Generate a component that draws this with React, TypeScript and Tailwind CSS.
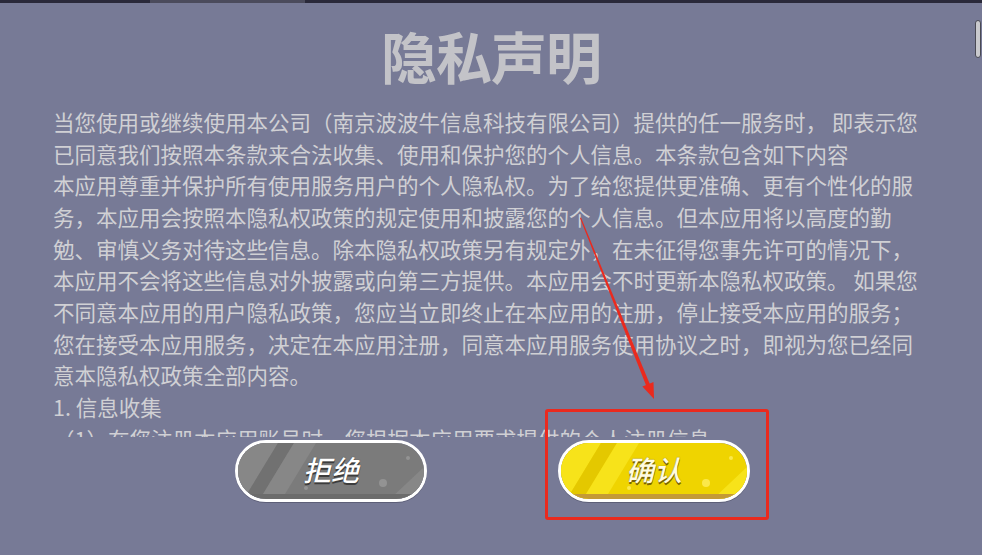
import React from "react";

const lines = [
  "当您使用或继续使用本公司（南京波波牛信息科技有限公司）提供的任一服务时， 即表示您",
  "已同意我们按照本条款来合法收集、使用和保护您的个人信息。本条款包含如下内容",
  "本应用尊重并保护所有使用服务用户的个人隐私权。为了给您提供更准确、更有个性化的服",
  "务，本应用会按照本隐私权政策的规定使用和披露您的个人信息。但本应用将以高度的勤",
  "勉、审慎义务对待这些信息。除本隐私权政策另有规定外，在未征得您事先许可的情况下，",
  "本应用不会将这些信息对外披露或向第三方提供。本应用会不时更新本隐私权政策。 如果您",
  "不同意本应用的用户隐私政策，您应当立即终止在本应用的注册，停止接受本应用的服务；",
  "您在接受本应用服务，决定在本应用注册，同意本应用服务使用协议之时，即视为您已经同",
  "意本隐私权政策全部内容。",
  "1. 信息收集",
];

// next line of the policy, scrolled half out of view
const peekLine = "（1）在您注册本应用账号时，您根据本应用要求提供的个人注册信息";

type Tone = {
  base: string;
  light: string;
  dark: string;
  edge: string;
  dot: string;
};

const grey: Tone = { base: "#7b7b7b", light: "#878787", dark: "#717171", edge: "#6c6c6c", dot: "#939393" };
const yellow: Tone = { base: "#efd400", light: "#f7e31a", dark: "#e4c800", edge: "#c49a36", dot: "#fbe84a" };

function GameButton({ label, tone, textClass }: { label: string; tone: Tone; textClass: string }) {
  return (
    <button className="relative w-[192px] h-[62px] rounded-full border-[3px] border-white overflow-hidden shadow-[0_1px_0_#5d5f78]">
      {/* stripes and sparkles */}
      <svg className="absolute inset-0" width="186" height="56" viewBox="0 0 186 56">
        <rect width="186" height="56" fill={tone.base} />
        <polygon points="0,0 40,0 6,56 0,56" fill={tone.light} />
        <polygon points="40,0 56,0 22,56 6,56" fill={tone.dark} />
        <polygon points="56,0 78,0 44,56 22,56" fill={tone.light} />
        <polygon points="186,24 186,56 152,56" fill={tone.light} />
        <rect y="51" width="186" height="5" fill={tone.edge} />
        <circle cx="145" cy="40" r="4" fill={tone.dot} />
        <circle cx="170" cy="15" r="2" fill={tone.dot} />
        <circle cx="68" cy="45" r="2" fill={tone.dot} />
      </svg>
      <span
        className={`relative block text-[28px] leading-none font-medium italic -mt-[4px] ${textClass}`}
      >
        {label}
      </span>
    </button>
  );
}

export default function App() {
  return (
    <div
      className="relative w-[982px] h-[555px] overflow-hidden bg-[#777a96]"
      style={{ fontFamily: '"Noto Sans CJK SC", "Noto Sans", sans-serif' }}
    >
      {/* top status strip */}
      <div className="h-[3px] bg-[#2a293a] flex">
        <div className="ml-[150px] w-[155px] bg-[#4b4b5c]" />
      </div>

      {/* title */}
      <div className="h-[103px] flex items-center justify-center">
        <h1 className="text-[56px] font-bold leading-none text-[#c3c3c8] tracking-[-1px]">隐私声明</h1>
      </div>

      {/* body text, scroll area */}
      <div className="h-[331px] overflow-hidden pl-[53px] text-[21.5px] leading-[31.67px] text-[#d0d0d4]">
        {lines.map((l, i) => (
          <div key={i} className="whitespace-nowrap">
            {l}
          </div>
        ))}
        <div className="h-[14px] overflow-hidden whitespace-nowrap">{peekLine}</div>
      </div>

      {/* buttons */}
      <div className="mt-[3px] flex justify-center gap-[131px] pl-[3px]">
        <GameButton label="拒绝" tone={grey} textClass="text-white [text-shadow:0_2px_0_#3c3c3c,0_0_1px_#3c3c3c]" />
        <GameButton label="确认" tone={yellow} textClass="text-[#fffbe0] [text-shadow:0_2px_0_#7a6400,0_0_1px_#7a6400]" />
      </div>

      {/* scrollbar thumb */}
      <div className="absolute right-[1px] top-[20px] w-[6px] h-[38px] rounded-[3px] bg-[#c9c9cd] border border-[#4a4a55]" />

      {/* annotation: red highlight box */}
      <div className="absolute left-[545px] top-[409px] w-[224px] h-[111px] border-[3px] border-[#ea2a1e] rounded-[3px]" />

      {/* annotation: red arrow */}
      <svg className="absolute inset-0 pointer-events-none" width="982" height="555">
        <polygon points="580,218 581,217.6 650,384.6 646.4,386.2" fill="#ea2a1e" />
        <polygon points="654,399 642.4,386.5 653.5,381.9" fill="#ea2a1e" />
      </svg>
    </div>
  );
}
